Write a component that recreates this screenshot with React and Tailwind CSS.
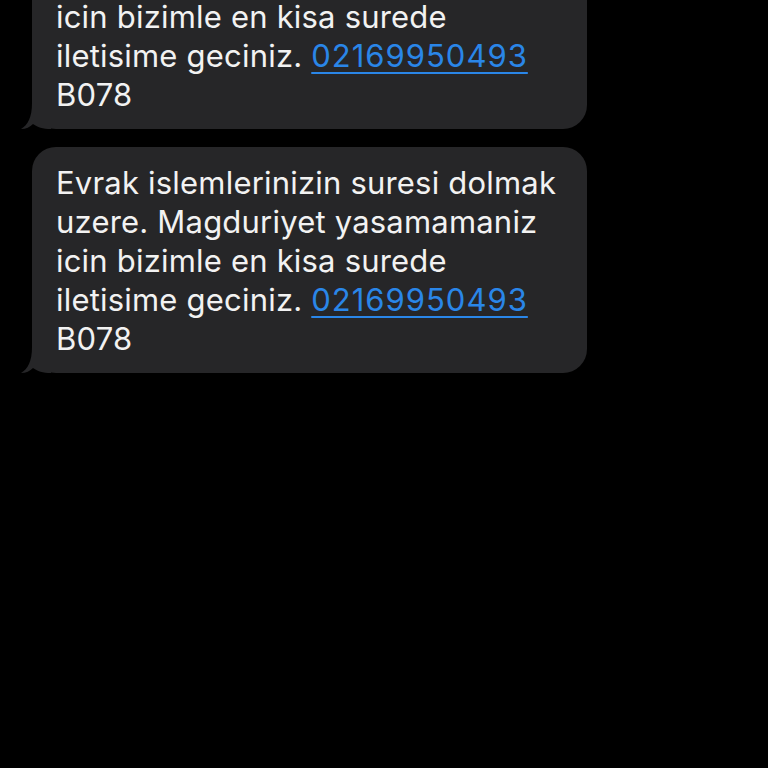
import React from 'react';

const lines = [
  'Evrak islemlerinizin suresi dolmak',
  'uzere. Magduriyet yasamamaniz',
  'icin bizimle en kisa surede',
];

const Bubble = ({ className = '' }) => (
  <div className={`relative w-[555px] ${className}`}>
    <div className="rounded-[24px] bg-[#262628] pl-[24px] pr-4 pt-[16px] pb-[15px] text-[31px] leading-[39px] tracking-[0.2px] text-[#f2f2f2] font-['Inter',sans-serif]">
      {lines.map((l) => (
        <div key={l} className="whitespace-nowrap">{l}</div>
      ))}
      <div className="whitespace-nowrap">
        iletisime geciniz.{' '}
        <span className="text-[#2a86e8] tracking-[1px] underline decoration-2 underline-offset-[5px]">02169950493</span>
      </div>
      <div>B078</div>
    </div>
    <svg className="absolute -left-[11px] bottom-0" width="30" height="26" viewBox="0 0 30 26">
      <path d="M11 0 L30 0 L30 26 C22 26 16 24 12 21 C9 24 5 26 0 26 C7 22 11 14 11 0 Z" fill="#262628" />
    </svg>
  </div>
);

export default function App() {
  return (
    <div className="w-[768px] h-[768px] bg-black overflow-hidden">
      <div className="pl-[32px] -mt-[97px] flex flex-col gap-[18px]">
        <Bubble />
        <Bubble />
      </div>
    </div>
  );
}
